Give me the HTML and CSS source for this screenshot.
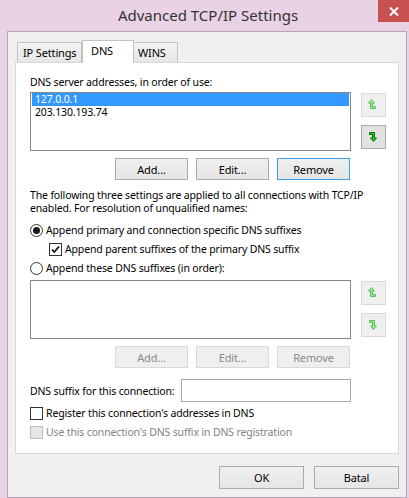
FILE: index.html
```html
<!DOCTYPE html>
<html>
<head>
<meta charset="utf-8">
<link rel="stylesheet" href="styles.css">
</head>
<body>
<div class="window">
  <div class="titlebar">
    <div class="title">Advanced TCP/IP Settings</div>
    <div class="close">
      <svg width="10" height="9" viewBox="0 0 10 9"><path d="M1 0.5 L9 8.5 M9 0.5 L1 8.5" stroke="#fff" stroke-width="2"/></svg>
    </div>
  </div>
  <div class="client">
    <div class="tabs">
      <div class="tab t1">IP Settings</div>
      <div class="tab active">DNS</div>
      <div class="tab t3">WINS</div>
    </div>
    <div class="panel">
      <div class="label">DNS server addresses, in order of use:</div>
      <div class="list-row">
        <div class="list">
          <div class="item sel">127.0.0.1</div>
          <div class="item">203.130.193.74</div>
        </div>
        <div class="arrows">
          <div class="arrow-btn disabled">
            <svg width="16" height="16" viewBox="0 0 16 16"><polygon points="5.5,2.5 8.5,6 6.5,6 6.5,9.5 9.5,9.5 9.5,11.5 4.5,11.5 4.5,6 2.5,6" fill="#9fe49f" stroke="#55c255" stroke-width="1"/></svg>
          </div>
          <div class="arrow-btn">
            <svg width="16" height="16" viewBox="0 0 16 16"><polygon points="7.5,12.5 10.5,9 8.5,9 8.5,3.5 3.5,3.5 3.5,5.5 6.5,5.5 6.5,9 4.5,9" fill="#16d016" stroke="#0b6a0b" stroke-width="1"/></svg>
          </div>
        </div>
      </div>
      <div class="btn-row">
        <div class="btn">Add...</div>
        <div class="btn">Edit...</div>
        <div class="btn default">Remove</div>
      </div>
      <div class="para">The following three settings are applied to all connections with TCP/IP<br>enabled. For resolution of unqualified names:</div>
      <div class="opt r1">
        <span class="radio on"><span class="dot"></span></span>
        <span>Append primary and connection specific DNS suffixes</span>
      </div>
      <div class="opt c1">
        <span class="check">
          <svg width="11" height="11" viewBox="0 0 11 11"><path d="M2 5.5 L4.3 8 L9 2.5" fill="none" stroke="#111" stroke-width="1.8"/></svg>
        </span>
        <span>Append parent suffixes of the primary DNS suffix</span>
      </div>
      <div class="opt r2">
        <span class="radio"></span>
        <span>Append these DNS suffixes (in order):</span>
      </div>
      <div class="list-row second">
        <div class="list"></div>
        <div class="arrows">
          <div class="arrow-btn disabled">
            <svg width="16" height="16" viewBox="0 0 16 16"><polygon points="5.5,2.5 8.5,6 6.5,6 6.5,9.5 9.5,9.5 9.5,11.5 4.5,11.5 4.5,6 2.5,6" fill="#9fe49f" stroke="#55c255" stroke-width="1"/></svg>
          </div>
          <div class="arrow-btn disabled">
            <svg width="16" height="16" viewBox="0 0 16 16"><polygon points="7.5,12.5 10.5,9 8.5,9 8.5,3.5 3.5,3.5 3.5,5.5 6.5,5.5 6.5,9 4.5,9" fill="#9fe49f" stroke="#55c255" stroke-width="1"/></svg>
          </div>
        </div>
      </div>
      <div class="btn-row">
        <div class="btn off">Add...</div>
        <div class="btn off">Edit...</div>
        <div class="btn off">Remove</div>
      </div>
      <div class="suffix-row">
        <span class="suffix-label">DNS suffix for this connection:</span>
        <span class="input"></span>
      </div>
      <div class="opt c2">
        <span class="check"></span>
        <span>Register this connection's addresses in DNS</span>
      </div>
      <div class="opt c3 disabled-opt">
        <span class="check dis"></span>
        <span>Use this connection's DNS suffix in DNS registration</span>
      </div>
    </div>
    <div class="footer">
      <div class="btn big">OK</div>
      <div class="btn big">Batal</div>
    </div>
  </div>
</div>
</body>
</html>
```
FILE: styles.css
```css
* { box-sizing: border-box; }
html, body { margin: 0; padding: 0; }
body {
  width: 409px;
  height: 498px;
  overflow: hidden;
  background: #e9d1e6;
  font-family: "Noto Sans", "Open Sans", sans-serif;
  font-size: 10.5px;
  letter-spacing: -0.15px;
  color: #000;
}
.window {
  position: relative;
  width: 409px;
  height: 498px;
  background: #e9d1e6;
}
.titlebar {
  height: 31px;
  display: flex;
  align-items: center;
  justify-content: center;
  padding-left: 7px;
  padding-bottom: 1px;
}
.title {
  font-size: 15px;
  letter-spacing: 0;
  color: #333;
}
.close {
  position: absolute;
  top: 0;
  right: 0;
  width: 31px;
  height: 22px;
  background: #c75050;
  display: flex;
  align-items: center;
  justify-content: center;
}
.client {
  margin-left: 7px;
  width: 400px;
  height: 467px;
  border: 1px solid #b3a7b1;
  background: #f0f0f0;
  padding: 8px 7px 0 7px;
}
.tabs {
  display: flex;
  align-items: flex-end;
  height: 22px;
  margin-left: 2px;
  position: relative;
  z-index: 1;
}
.tab {
  height: 20px;
  border: 1px solid #c3c3c3;
  border-bottom: none;
  background: linear-gradient(#f3f3f3, #e6e6e6);
  line-height: 19px;
  white-space: nowrap;
  font-size: 11px;
}
.t1 { width: 65px; padding-left: 5px; }
.active {
  width: 52px;
  height: 23px;
  margin-bottom: -1px;
  background: #fff;
  padding-left: 8px;
  line-height: 19px;
}
.t3 { width: 45px; margin-left: -1px; padding-left: 4px; }
.panel {
  height: 392px;
  background: #fff;
  border: 1px solid #d9d9d9;
  padding: 13px 11px 0 14px;
}
.label, .para, .opt { line-height: 13px; white-space: nowrap; }
.label { height: 13px; }
.list-row {
  display: flex;
  gap: 10px;
  margin-top: 3px;
}
.list-row.second { margin-top: 5px; }
.list {
  width: 321px;
  height: 59px;
  border: 1px solid #828790;
  background: #fff;
  padding: 0 1px;
}
.item {
  height: 13px;
  line-height: 13px;
  padding-left: 3px;
}
.item.sel { background: #3399ff; color: #fff; }
.arrows {
  display: flex;
  flex-direction: column;
  gap: 8px;
  padding-top: 1px;
}
.arrow-btn {
  width: 25px;
  height: 24px;
  border: 1px solid #acacac;
  background: #e1e1e1;
  display: flex;
  align-items: center;
  justify-content: center;
}
.arrow-btn.disabled {
  border-color: #d9d9d9;
  background: #efefef;
}
.btn-row {
  display: flex;
  justify-content: flex-end;
  gap: 8px;
  width: 320px;
  margin-top: 7px;
}
.btn {
  width: 73px;
  height: 22px;
  border: 1px solid #acacac;
  background: linear-gradient(#f0f0f0, #e5e5e5);
  display: flex;
  align-items: center;
  justify-content: center;
  font-size: 11px;
}
.btn.default { border-color: #3c9fed; }
.btn.off {
  border-color: #d9d9d9;
  background: #efefef;
  color: #8a8a8a;
}
.para { margin-top: 9px; }
.opt {
  display: flex;
  align-items: center;
  height: 13px;
  gap: 3px;
}
.r1 { margin-top: 9px; }
.c1 { margin-top: 6px; padding-left: 19px; }
.r2 { margin-top: 6px; }
.c2 { margin-top: 5px; }
.c3 { margin-top: 6px; }
.radio {
  width: 13px;
  height: 13px;
  border-radius: 50%;
  border: 1px solid #333;
  background: #fff;
  display: flex;
  align-items: center;
  justify-content: center;
  flex: none;
}
.dot {
  width: 7px;
  height: 7px;
  border-radius: 50%;
  background: #1a1a1a;
}
.check {
  width: 13px;
  height: 13px;
  border: 1px solid #333;
  background: #fff;
  display: flex;
  align-items: center;
  justify-content: center;
  flex: none;
}
.check.dis {
  border-color: #bcbcbc;
  background: #e6e6e6;
}
.disabled-opt { color: #838383; }
.suffix-row {
  display: flex;
  align-items: center;
  margin-top: 11px;
  height: 23px;
}
.suffix-label { width: 151px; white-space: nowrap; }
.input {
  width: 170px;
  height: 23px;
  border: 1px solid #a9a9a9;
  background: #fff;
}
.footer {
  display: flex;
  justify-content: flex-end;
  gap: 10px;
  margin-top: 12px;
}
.btn.big { width: 85px; height: 23px; }
```
